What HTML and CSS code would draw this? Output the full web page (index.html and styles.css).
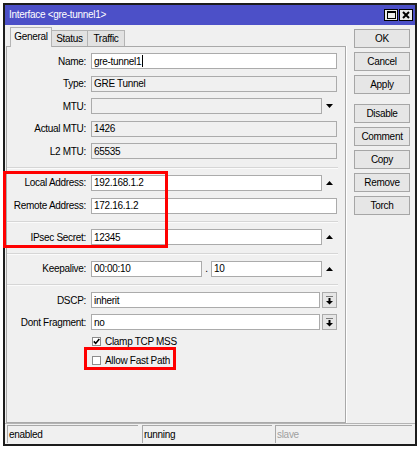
FILE: index.html
```html
<!DOCTYPE html>
<html>
<head>
<meta charset="utf-8">
<link rel="stylesheet" href="styles.css">
</head>
<body>
<div class="win">
  <div class="titlebar">
    <span class="title">Interface &lt;gre-tunnel1&gt;</span>
    <div class="tbtns">
      <span class="tbtn"><svg width="9" height="8" viewBox="0 0 9 8"><rect x="0.5" y="0.5" width="8" height="7" fill="none" stroke="#000"/><rect x="0" y="0" width="9" height="2" fill="#000"/></svg></span>
      <span class="tbtn"><svg width="8" height="8" viewBox="0 0 8 8"><path d="M1 1L7 7M7 1L1 7" stroke="#000" stroke-width="2"/></svg></span>
    </div>
  </div>
  <div class="main">
    <div class="left">
      <div class="tabs">
        <span class="tab active">General</span>
        <span class="tab t-status">Status</span>
        <span class="tab t-traffic">Traffic</span>
      </div>
      <div class="pane">
        <div class="sec s1">
          <div class="row"><span class="lbl">Name:</span><div class="f w"><span>gre-tunnel1</span><span class="caret"></span></div></div>
          <div class="row"><span class="lbl">Type:</span><div class="f">GRE Tunnel</div></div>
          <div class="row"><span class="lbl">MTU:</span><div class="f short"></div><span class="tail"><svg width="7" height="4" viewBox="0 0 7 4"><path d="M0 0H7L3.5 4Z"/></svg></span></div>
          <div class="row"><span class="lbl">Actual MTU:</span><div class="f">1426</div></div>
          <div class="row"><span class="lbl">L2 MTU:</span><div class="f">65535</div></div>
        </div>
        <div class="sep"></div>
        <div class="sec s2">
          <div class="row"><span class="lbl">Local Address:</span><div class="f w short">192.168.1.2</div><span class="tail"><svg width="7" height="4" viewBox="0 0 7 4"><path d="M0 4H7L3.5 0Z"/></svg></span></div>
          <div class="row"><span class="lbl">Remote Address:</span><div class="f w">172.16.1.2</div></div>
        </div>
        <div class="sep"></div>
        <div class="sec">
          <div class="row"><span class="lbl">IPsec Secret:</span><div class="f w short">12345</div><span class="tail"><svg width="7" height="4" viewBox="0 0 7 4"><path d="M0 4H7L3.5 0Z"/></svg></span></div>
        </div>
        <div class="sep"></div>
        <div class="sec">
          <div class="row"><span class="lbl">Keepalive:</span><div class="f w half">00:00:10</div><span class="dot">.</span><div class="f w half">10</div><span class="tail"><svg width="7" height="4" viewBox="0 0 7 4"><path d="M0 4H7L3.5 0Z"/></svg></span></div>
        </div>
        <div class="sep"></div>
        <div class="sec s5">
          <div class="row"><span class="lbl">DSCP:</span><div class="f w drop">inherit</div><span class="dbtn"><svg width="7" height="9" viewBox="0 0 7 9"><rect x="0" y="0" width="7" height="1" fill="#7a7a7a"/><rect x="2.5" y="2" width="2" height="3" fill="#000"/><path d="M0 5H7L3.5 8.5Z" fill="#000"/></svg></span></div>
          <div class="row"><span class="lbl">Dont Fragment:</span><div class="f w drop">no</div><span class="dbtn"><svg width="7" height="9" viewBox="0 0 7 9"><rect x="0" y="0" width="7" height="1" fill="#7a7a7a"/><rect x="2.5" y="2" width="2" height="3" fill="#000"/><path d="M0 5H7L3.5 8.5Z" fill="#000"/></svg></span></div>
        </div>
        <div class="crow c1"><span class="cb"><svg width="7" height="7" viewBox="0 0 7 7"><path d="M0.8 3.4L2.7 5.4L6.3 1" fill="none" stroke="#000" stroke-width="1.6"/></svg></span><span>Clamp TCP MSS</span></div>
        <div class="crow c2"><span class="cb"></span><span>Allow Fast Path</span></div>
      </div>
    </div>
    <div class="right">
      <span class="btn">OK</span>
      <span class="btn">Cancel</span>
      <span class="btn">Apply</span>
      <span class="btn gap">Disable</span>
      <span class="btn">Comment</span>
      <span class="btn">Copy</span>
      <span class="btn">Remove</span>
      <span class="btn">Torch</span>
    </div>
  </div>
  <div class="status">
    <span class="cell c-a">enabled</span>
    <span class="cell c-b">running</span>
    <span class="cell c-c dim">slave</span>
  </div>
  <div class="redbox rb1"></div>
  <div class="redbox rb2"></div>
</div>
</body>
</html>
```
FILE: styles.css
```css
body {
  margin: 0;
  background: #fff;
  font-family: "Liberation Sans", Arial, sans-serif;
  font-size: 10px;
  letter-spacing: -0.3px;
  color: #000;
}
.win {
  position: relative;
  margin: 3px 0 0 3px;
  width: 414px;
  height: 443px;
  box-sizing: border-box;
  border: 2px solid #1c1c1c;
  background: #f0f0f0;
  display: flex;
  flex-direction: column;
}
.titlebar {
  height: 20px;
  flex: none;
  background: #4c50c8;
  display: flex;
  align-items: flex-start;
  justify-content: space-between;
  padding: 0 2px 0 4px;
  color: #fff;
}
.title { line-height: 20px; }
.tbtns { display: flex; gap: 1px; margin-top: 4px; }
.tbtn {
  width: 14px;
  height: 12px;
  box-sizing: border-box;
  border: 1px solid #000;
  background: #ececec;
  display: flex;
  align-items: center;
  justify-content: center;
}
.main { flex: 1; display: flex; min-height: 0; }
.left {
  width: 341px;
  flex: none;
  padding-left: 1px;
  box-sizing: border-box;
  display: flex;
  flex-direction: column;
}
.tabs {
  height: 21px;
  flex: none;
  display: flex;
  align-items: flex-end;
  padding-left: 4px;
}
.tab {
  height: 16px;
  box-sizing: border-box;
  border: 1px solid #b4b4b4;
  border-bottom: none;
  background: #e2e2e2;
  display: flex;
  align-items: center;
  justify-content: center;
}
.tab.active {
  width: 42px;
  height: 20px;
  margin-bottom: -1px;
  background: #f0f0f0;
  position: relative;
  padding-bottom: 2px;
}
.t-status { width: 36px; border-left: none; }
.t-traffic { width: 37px; border-left: none; }
.pane {
  flex: 1;
  border: 1px solid #a9a9a9;
  box-shadow: 1px 0 0 #fff;
  padding-top: 6px;
}
.sec { display: flex; flex-direction: column; }
.s1 { gap: 6.5px; }
.s2 { gap: 7px; }
.s5 { gap: 6px; }
.row { display: flex; align-items: center; height: 16px; }
.lbl { width: 79px; flex: none; text-align: right; margin-right: 5px; }
.f {
  flex: none;
  width: 246px;
  height: 16px;
  box-sizing: border-box;
  border: 1px solid #ababab;
  background: #f0f0f0;
  padding-left: 2px;
  display: flex;
  align-items: center;
  white-space: nowrap;
}
.f.w { background: #fff; }
.f.short { width: 231px; }
.f.half { width: 111px; }
.f.drop { width: 229px; margin-right: 2px; }
.caret { width: 1px; height: 12px; background: #000; margin-left: 1px; }
.tail { width: 15px; flex: none; display: flex; justify-content: center; align-items: center; }
.dot { width: 9px; text-align: center; flex: none; }
.dbtn {
  width: 15px;
  height: 16px;
  box-sizing: border-box;
  border: 1px solid #ababab;
  background: #e6e6e6;
  display: flex;
  align-items: center;
  justify-content: center;
}
.sep {
  width: 331px;
  height: 2px;
  box-sizing: border-box;
  border-top: 1px solid #d6d6d6;
  border-bottom: 1px solid #fbfbfb;
  margin: 7.5px 0 6px;
}
.crow { display: flex; align-items: center; height: 14px; padding-left: 85px; }
.c1 { margin-top: 4px; }
.c2 { margin-top: 5px; }
.cb {
  width: 9px;
  height: 9px;
  box-sizing: border-box;
  border: 1px solid #8c8c8c;
  background: #fff;
  margin-right: 4px;
  display: flex;
  align-items: center;
  justify-content: center;
}
.right {
  flex: 1;
  padding: 4px 0 0 8px;
  display: flex;
  flex-direction: column;
  gap: 4px;
}
.btn {
  width: 56px;
  height: 19px;
  box-sizing: border-box;
  border: 1px solid #a6a6a6;
  background: #e6e6e6;
  display: flex;
  align-items: center;
  justify-content: center;
}
.btn.gap { margin-top: 6px; }
.status {
  height: 21px;
  flex: none;
  box-sizing: border-box;
  border-top: 1px solid #b4b4b4;
  padding: 1px 2px 1px 2px;
  display: flex;
}
.cell {
  height: 18px;
  box-sizing: border-box;
  border-top: 1px solid #a9a9a9;
  border-left: 1px solid #a9a9a9;
  padding-left: 1px;
  display: flex;
  align-items: center;
}
.c-a { width: 131px; margin-right: 4px; }
.c-b { width: 130px; margin-right: 3px; }
.c-c { width: 137px; }
.dim { color: #a0a0a0; }
.redbox {
  position: absolute;
  box-sizing: border-box;
  border: 3px solid #ff0000;
}
.rb1 { left: -2px; top: 166px; width: 165px; height: 77px; }
.rb2 { left: 79px; top: 342px; width: 92px; height: 23px; }
```
